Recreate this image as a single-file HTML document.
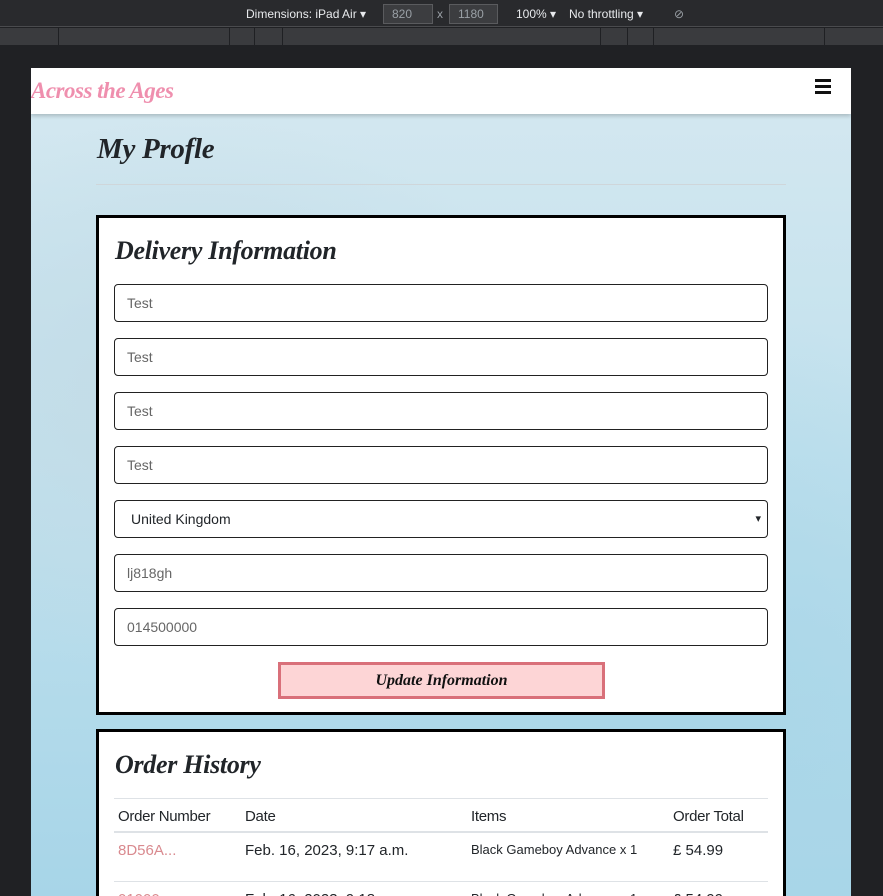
<!DOCTYPE html>
<html><head><meta charset="utf-8"><style>
*{box-sizing:border-box;margin:0;padding:0}
body{width:883px;height:896px;overflow:hidden;background:#202124;font-family:"Liberation Sans",sans-serif;position:relative}
.tb{position:absolute;left:0;top:0;width:883px;height:27px;background:#292a2d;border-bottom:1px solid #4a4b4e;color:#e8eaed;font-size:12px}
.tb span{position:absolute;top:7px}
.tb .in{position:absolute;top:4px;height:20px;border:1px solid #5a5b5e;background:#3c3d40;color:#9aa0a6;padding:2px 8px;font-size:12px}
.rul{position:absolute;left:0;top:28px;width:883px;height:17px;background:#3a3b3e}
.rul i{position:absolute;top:0;width:1px;height:17px;background:#1f2023}
.vp{position:absolute;left:31px;top:68px;width:820px;height:828px;overflow:hidden;
background:radial-gradient(ellipse at 20% 40%,#c3dbe6 0,transparent 40%),radial-gradient(ellipse at 80% 80%,#a9d6e8 0,transparent 45%),linear-gradient(180deg,#d5e8f0 0%,#bfe0ed 50%,#a7d5e8 100%)}
.nav{position:absolute;left:0;top:0;width:820px;height:46px;background:#fff;box-shadow:0 2px 4px rgba(0,0,0,.2)}
.logo{position:absolute;left:0;top:10px;color:#ef8fae;font:italic bold 23px "Liberation Serif",serif;letter-spacing:-.5px}
.burger{position:absolute;left:784px;top:11px;width:16px}
.burger i{display:block;height:3px;background:#111;margin-bottom:3px}
h1{position:absolute;left:66px;top:65px;font:italic bold 29px "Liberation Serif",serif;color:#212529;letter-spacing:-.3px}
.hr{position:absolute;left:65px;top:116px;width:690px;height:1px;background:#cfd6da}
.card{position:absolute;left:65px;width:690px;background:#fff;border:3px solid #000}
h2{font:italic bold 26px "Liberation Serif",serif;color:#212529;margin:18px 0 0 16px;letter-spacing:-.3px}
.f{position:absolute;left:15px;width:654px;height:38px;border:1px solid #222;border-radius:4px;padding:0 12px;line-height:36px;font-size:14px;color:#666}
.btn{position:absolute;left:179px;top:444px;width:327px;height:37px;border:3px solid #d9707a;background:#fdd5d6;text-align:center;font:italic bold 16px "Liberation Serif",serif;line-height:31px;color:#111}
table{position:absolute;left:15px;top:66px;width:654px;border-collapse:collapse;font-size:15px}
th{text-align:left;font-weight:normal;color:#212529;padding:9px 4px 6px;border-top:1px solid #dee2e6;border-bottom:2px solid #dee2e6;font-size:15px;letter-spacing:-.3px}
td{padding:9px 4px 22px;border-bottom:1px solid #dee2e6;color:#212529;vertical-align:top}
</style></head><body>
<div class="tb">
<span style="left:246px">Dimensions: iPad Air ▾</span>
<div class="in" style="left:383px;width:50px">820</div>
<span style="left:437px;color:#9aa0a6">x</span>
<div class="in" style="left:449px;width:49px">1180</div>
<span style="left:516px">100% ▾</span>
<span style="left:569px">No throttling ▾</span>
<span style="left:674px;color:#9aa0a6">⊘</span>
</div>
<div class="rul"><i style="left:58px"></i><i style="left:229px"></i><i style="left:254px"></i><i style="left:282px"></i><i style="left:600px"></i><i style="left:627px"></i><i style="left:653px"></i><i style="left:824px"></i></div>
<div class="vp">
<div class="nav"><div class="logo">Across the Ages</div><div class="burger"><i></i><i></i><i></i></div></div>
<h1>My Profle</h1>
<div class="hr"></div>
<div class="card" style="top:147px;height:500px">
<h2>Delivery Information</h2>
<div class="f" style="top:66px">Test</div>
<div class="f" style="top:120px">Test</div>
<div class="f" style="top:174px">Test</div>
<div class="f" style="top:228px">Test</div>
<div class="f" style="top:282px;color:#212529;padding-left:16px">United Kingdom<span style="position:absolute;right:6px;font-size:11px">▾</span></div>
<div class="f" style="top:336px">lj818gh</div>
<div class="f" style="top:390px">014500000</div>
<div class="btn">Update Information</div>
</div>
<div class="card" style="top:661px;height:200px">
<h2>Order History</h2>
<table>
<tr><th style="width:127px">Order Number</th><th style="width:226px">Date</th><th style="width:202px">Items</th><th>Order Total</th></tr>
<tr><td style="color:#d98a8f">8D56A...</td><td>Feb. 16, 2023, 9:17 a.m.</td><td style="font-size:13px">Black Gameboy Advance x 1</td><td>£ 54.99</td></tr>
<tr><td style="color:#d98a8f">01000...</td><td>Feb. 16, 2023, 9:18 a.m.</td><td style="font-size:13px">Black Gameboy Advance x 1</td><td>£ 54.99</td></tr>
</table>
</div>
</div>
</body></html>
